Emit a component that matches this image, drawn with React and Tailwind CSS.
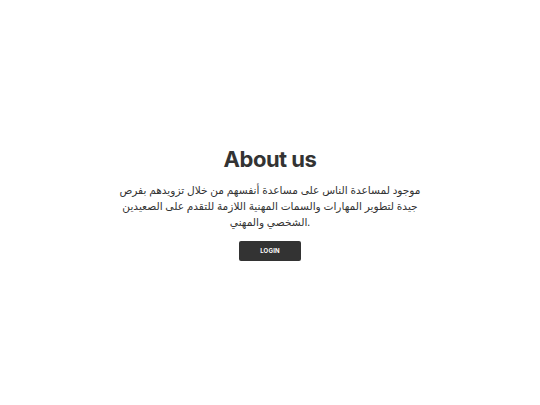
export default function App() {
  return (
    <div className="flex h-[405px] w-full items-center justify-center bg-white font-['Inter','Noto_Sans',sans-serif] text-[#333333]">
      <div className="flex w-[314px] flex-col items-center">
        <h1 className="text-[22px] font-bold leading-[28px] tracking-[-0.5px]">About us</h1>
        <p
          dir="ltr"
          className="mt-[9px] text-center font-['Noto_Sans','DejaVu_Sans',sans-serif] text-[10.6px] leading-[16px] text-[#333333]"
        >
          موجود لمساعدة الناس على مساعدة أنفسهم من خلال تزويدهم بفرص جيدة لتطوير المهارات والسمات المهنية اللازمة للتقدم على الصعيدين الشخصي والمهني.
        </p>
        <button
          type="button"
          className="mt-[11px] flex h-[20px] w-[62px] items-center justify-center rounded-[2px] bg-[#333333] text-[6px] font-bold tracking-[0.2px] text-white"
        >
          LOGIN
        </button>
      </div>
    </div>
  )
}
